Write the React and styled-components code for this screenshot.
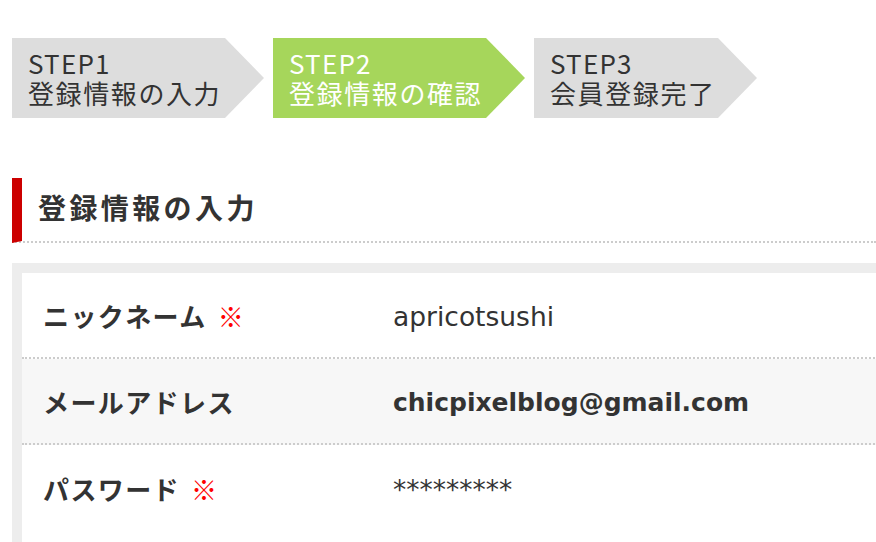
import React from 'react';
import styled, { createGlobalStyle } from 'styled-components';

const GlobalStyle = createGlobalStyle`
  html, body {
    margin: 0;
    padding: 0;
    background: #fff;
    overflow: hidden;
  }
  body {
    font-family: "Noto Sans CJK JP", "DejaVu Sans", sans-serif;
    color: #333;
  }
`;

const Page = styled.div`
  width: 876px;
  height: 542px;
  padding: 38px 0 0 12px;
  box-sizing: border-box;
  overflow: hidden;
`;

const Steps = styled.ol`
  display: flex;
  gap: 9px;
  margin: 0;
  padding: 0;
  list-style: none;
`;

const Step = styled.li`
  width: ${({ $w }) => $w + 39}px;
  height: 80px;
  box-sizing: border-box;
  padding: 10px 0 10px 16px;
  background: ${({ $active }) => ($active ? '#a6d65b' : '#dddddd')};
  color: ${({ $active }) => ($active ? '#fff' : '#333')};
  clip-path: polygon(0 0, calc(100% - 39px) 0, 100% 50%, calc(100% - 39px) 100%, 0 100%);
  font-family: "Noto Sans CJK JP", sans-serif;
  font-size: 26px;
  line-height: 30px;
  letter-spacing: 1.6px;
  white-space: nowrap;
`;

const StepNo = styled.div`
  letter-spacing: 1.2px;
`;

const Heading = styled.h2`
  margin: 60px 0 0;
  padding: 0 0 4px 16px;
  border-left: 10px solid #cc0000;
  border-bottom: 2px dotted #cccccc;
  font-family: "Noto Sans CJK JP", sans-serif;
  font-size: 28px;
  font-weight: 700;
  line-height: 59px;
  letter-spacing: 3.4px;
  color: #333;
`;

const Table = styled.div`
  min-height: 300px;
  margin: 20px -30px 0 0;
  border-top: 10px solid #ededed;
  border-left: 10px solid #ededed;
`;

const Row = styled.div`
  display: grid;
  grid-template-columns: 371px 1fr;
  align-items: center;
  height: 86px;
  box-sizing: border-box;
  background: ${({ $alt }) => ($alt ? '#f7f7f7' : '#fff')};
  border-bottom: ${({ $last }) => ($last ? 'none' : '2px dotted #cccccc')};
`;

const Label = styled.div`
  padding-left: 21px;
  font-family: "Noto Sans CJK JP", sans-serif;
  font-size: 26px;
  font-weight: 700;
  letter-spacing: 1.4px;
  white-space: nowrap;
`;

const Required = styled.span`
  margin-left: 11px;
  color: #ff0000;
  letter-spacing: 0;
`;

const Value = styled.div`
  padding-top: 3px;
  font-family: "DejaVu Sans", sans-serif;
  font-size: ${({ $bold }) => ($bold ? '25px' : '26.5px')};
  font-weight: ${({ $bold }) => ($bold ? 700 : 400)};
  white-space: nowrap;
`;

const steps = [
  { no: 'STEP1', name: '登録情報の入力', w: 213 },
  { no: 'STEP2', name: '登録情報の確認', w: 213, active: true },
  { no: 'STEP3', name: '会員登録完了', w: 184 },
];

const rows = [
  { label: 'ニックネーム', required: true, value: 'apricotsushi' },
  { label: 'メールアドレス', value: 'chicpixelblog@gmail.com', bold: true },
  { label: 'パスワード', required: true, value: '*********' },
];

export default function App() {
  return (
    <>
      <GlobalStyle />
      <Page>
        <Steps>
          {steps.map((s) => (
            <Step key={s.no} $w={s.w} $active={s.active}>
              <StepNo>{s.no}</StepNo>
              <div>{s.name}</div>
            </Step>
          ))}
        </Steps>

        <Heading>登録情報の入力</Heading>

        <Table>
          {rows.map((r, i) => (
            <Row key={r.label} $alt={i % 2 === 1} $last={i === rows.length - 1}>
              <Label>
                {r.label}
                {r.required && <Required>※</Required>}
              </Label>
              <Value $bold={r.bold}>{r.value}</Value>
            </Row>
          ))}
        </Table>
      </Page>
    </>
  );
}
